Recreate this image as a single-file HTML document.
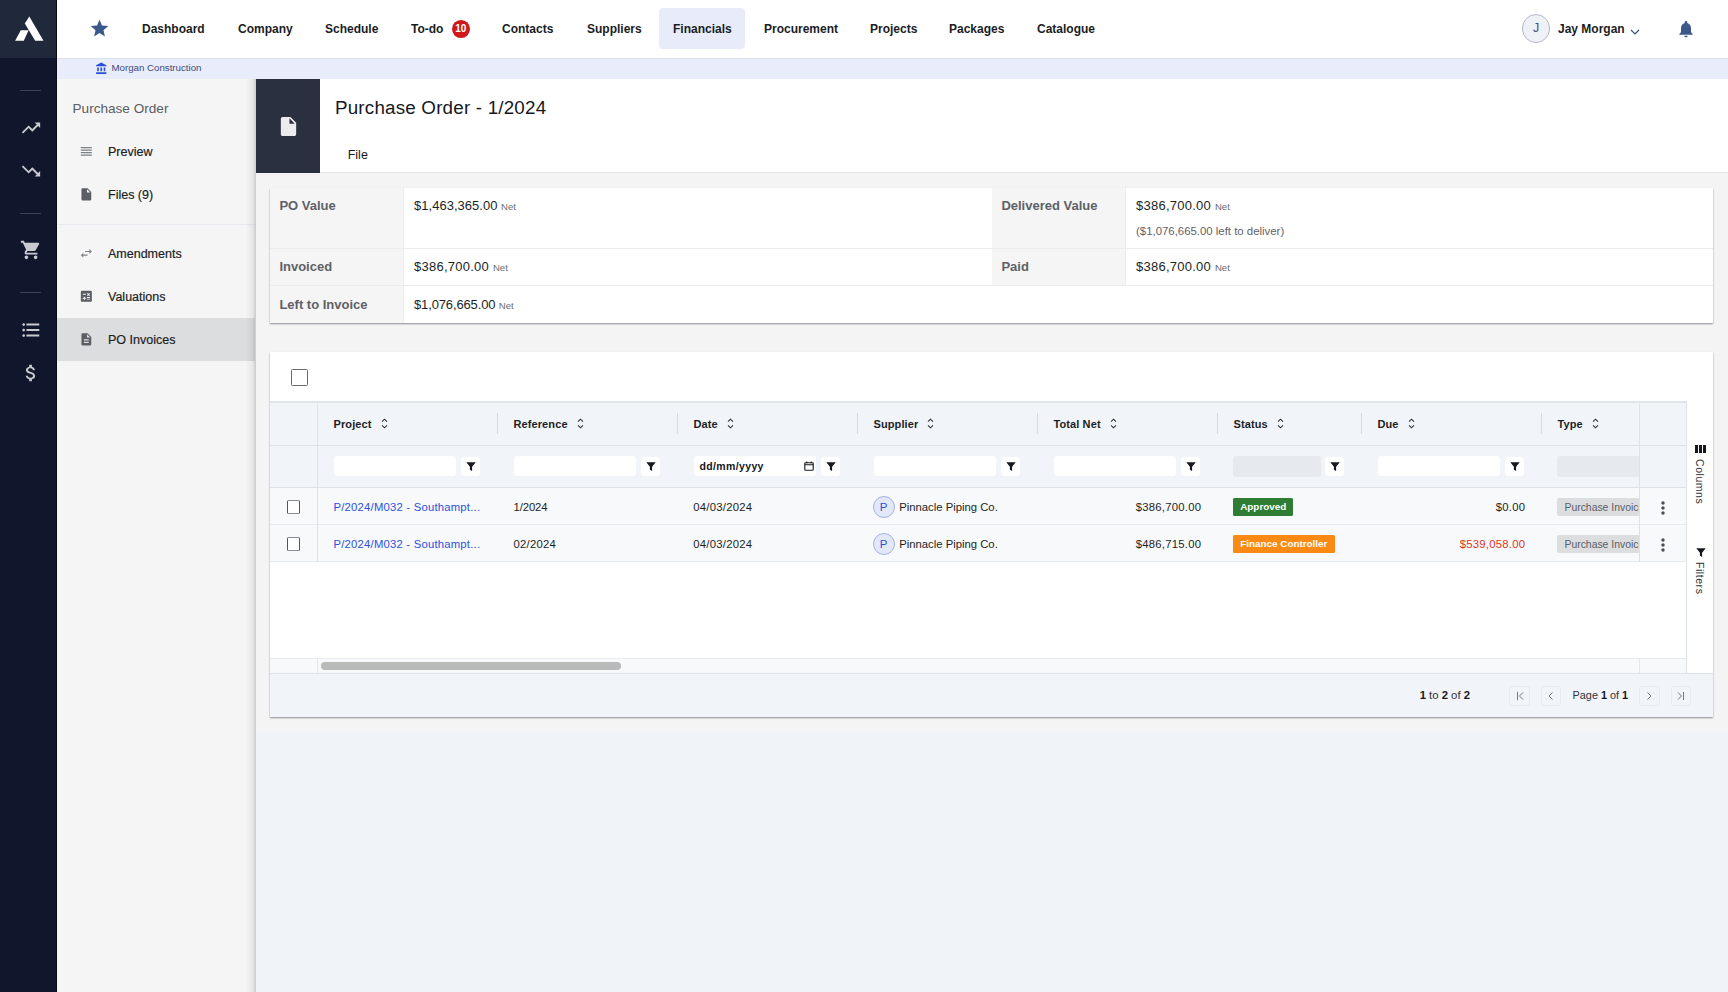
<!DOCTYPE html>
<html lang="en">
<head>
<meta charset="utf-8">
<title>Purchase Order - 1/2024</title>
<style>
*{box-sizing:border-box;margin:0;padding:0}
html,body{width:1728px;height:992px;overflow:hidden}
body{font-family:"Liberation Sans",sans-serif;background:#f4f4f4;color:#1c1f26;position:relative;font-size:12px}
.abs{position:absolute}
/* dark rail */
#rail{position:absolute;left:0;top:0;width:57.400px;height:992px;background:#10162c;border-right:1.400px solid #070a14;z-index:2}
#rail .logo{position:absolute;left:0;top:0;width:56px;height:57.500px;background:#20283b}
#rail .sep{position:absolute;left:20px;width:21px;height:1px;background:#3d4356}
#rail svg{position:absolute}
/* top nav */
#nav{position:absolute;left:57px;top:0;width:1671px;height:59px;background:#fff;border-bottom:1.700px solid #dde1e9}
#nav .it{position:absolute;top:1px;height:57px;line-height:57px;font-size:12px;font-weight:bold;color:#1a1d24;white-space:nowrap}
#nav .act{position:absolute;left:602px;top:8px;width:86px;height:41px;background:#e8ecfa;border-radius:4px}
#crumb{position:absolute;left:57px;top:59px;width:1671px;height:20px;background:#e9edfb}
#crumb span{position:absolute;left:54.500px;top:0;line-height:18.300px;font-size:9.700px;color:#3c4a7a;white-space:nowrap}
/* sub sidebar */
#side{position:absolute;left:57px;top:79px;width:198px;height:913px;background:#f5f5f5}
#side .ttl{position:absolute;left:15.500px;top:22px;font-size:13.600px;color:#5a5d63;white-space:nowrap}
#side .mi{position:absolute;left:0;width:198px;height:43px;line-height:44px;font-size:12.5px;color:#1c1f26;-webkit-text-stroke:.2px #1c1f26;padding-left:51px;white-space:nowrap}
#side .mi.sel{background:#dcdddf}
#side .hr{position:absolute;left:0;top:145px;width:198px;height:1px;background:#e6e9ee}
#side svg{position:absolute}
/* header */
#hdr{position:absolute;left:256px;top:79px;width:1472px;height:94px;background:#fff;border-bottom:1px solid #e6e6e6}
#hdr .ic{position:absolute;left:0;top:0;width:64px;height:94px;background:#2b3040}
#hdr h1{position:absolute;left:79px;top:18px;font-size:18.800px;font-weight:normal;color:#15181e;white-space:nowrap;letter-spacing:.2px}
#hdr .file{position:absolute;left:91.700px;top:68.500px;font-size:12.5px;color:#15181e}
/* summary */
#sum{position:absolute;left:270px;top:188px;width:1443px;height:134.500px;background:#fff;box-shadow:0 1px 1.500px rgba(40,44,60,.5)}
#sum .lb{position:absolute;background:#f5f5f5;width:134px;border-right:1px solid #ececec;font-size:13px;font-weight:bold;color:#5e6167;padding:10px 0 0 9.400px;white-space:nowrap}
#sum .vl{position:absolute;font-size:13px;color:#1c1f26;padding:10px 0 0 10px;letter-spacing:.25px;white-space:nowrap}
#sum .vl small{letter-spacing:0;font-size:9.600px;color:#6a6d73}
#sum .vl .sub{display:block;letter-spacing:0;font-size:11.400px;color:#5f6268;margin-top:11.900px}
#sum .ln{position:absolute;height:1px;background:#ececec}
/* grid */
#grid{position:absolute;left:270px;top:352px;width:1443px;height:365px;background:#fff;box-shadow:0 1px 1.500px rgba(40,44,60,.5)}
.cb{position:absolute;border:1.500px solid #666a70;border-radius:1.500px;background:#fff}
#gh{position:absolute;left:0;top:49px;width:1416px;height:45px;background:#f1f4f8;border-top:2px solid #e0e5ec;border-bottom:1px solid #dde2ea}
#gf{position:absolute;left:0;top:94px;width:1416px;height:42px;background:#f1f4f8;border-bottom:1px solid #dde2ea}
.hc{position:absolute;top:0;height:42.400px;line-height:42.400px;letter-spacing:.1px;font-size:11px;font-weight:bold;color:#1c1f26;white-space:nowrap}
.hsep{position:absolute;top:10px;width:1px;height:21px;background:#d5dae2}
.fi{position:absolute;top:10.300px;height:20px;width:122.500px;background:#fff;border-radius:3px}
.fi.dis{background:#e6e9ee}
.fb{position:absolute;top:11px;width:19px;height:19px;background:#fff;border-radius:3px}
.row{position:absolute;left:0;width:1416px;height:37px;background:#f7f9fb;border-bottom:1px solid #e7ebf0;font-size:11.300px;line-height:38.400px;letter-spacing:.25px;color:#1c1f26}
.row span{position:absolute;top:0;white-space:nowrap}
.row a{position:absolute;top:0;letter-spacing:.21px;color:#2d52dc;text-decoration:none;white-space:nowrap}
.vline{position:absolute;width:1px;background:#dde2ea}
.tag{position:absolute;height:18.500px;line-height:18.500px;letter-spacing:0;font-size:9.900px;font-weight:bold;color:#fff;padding:0 7.200px;border-radius:1.500px;white-space:nowrap}
.av{position:absolute;width:22px;height:22px;border-radius:50%;background:#e3e8f8;border:1px solid #a3b2e6;color:#2c50d4;font-size:11.500px;letter-spacing:0;line-height:20px;text-align:center}
#foot{position:absolute;left:0;top:321px;width:1443px;height:44px;background:#f1f4f8;border-top:1px solid #dde2ea;font-size:11.300px;color:#30333a}
#foot span{position:absolute;top:0;line-height:43.500px;white-space:nowrap}
#foot b{color:#15181e}
.pg{position:absolute;top:11.800px;width:20.800px;height:20.600px;border:1px solid #e7eaef;border-radius:3px}
#sp{position:absolute;left:1416px;top:49px;width:27px;height:272px;background:#fff;border-left:1px solid #dde2ea}
#sp .t{position:absolute;left:7px;font-size:10.500px;color:#30333a;writing-mode:vertical-rl;white-space:nowrap;letter-spacing:.55px}
#lowbg{position:absolute;left:256px;top:730.700px;width:1472px;height:262px;background:#f0f4f9}
</style>
</head>
<body>
<div id="lowbg"></div>
<div id="rail">
<div class="logo"><svg width="57" height="57" viewBox="0 0 57 57" style="left:0;top:0"><path fill="#fff" d="M29.3 16.4 L43.5 40.8 L35.2 40.8 L24.8 23.5 Z M20.8 30.2 L28.6 30.2 L23.8 40.8 L15.1 40.8 Z"/></svg></div>
<div class="sep" style="top:90px"></div>
<svg width="22" height="22" viewBox="0 0 24 24" style="left:20px;top:116.600px" fill="#c9cacf"><path d="M16 6l2.29 2.29-4.88 4.88-4-4L2 16.59 3.410 18l6-6 4 4 6.300-6.290L22 12V6z"/></svg>
<svg width="22" height="22" viewBox="0 0 24 24" style="left:20px;top:159.600px" fill="#c9cacf"><path d="M16 18l2.290-2.290-4.880-4.880-4 4L2 7.410 3.410 6l6 6 4-4 6.300 6.290L22 12v6z"/></svg>
<div class="sep" style="top:213px"></div>
<svg width="22" height="22" viewBox="0 0 24 24" style="left:20px;top:239px" fill="#c9cacf"><path d="M7 18c-1.100 0-1.990.9-1.990 2S5.900 22 7 22s2-.9 2-2-.9-2-2-2zM1 2v2h2l3.600 7.590-1.350 2.450c-.160.280-.250.610-.250.960 0 1.100.9 2 2 2h12v-2H7.420c-.140 0-.250-.110-.250-.250l.030-.120.900-1.630h7.450c.750 0 1.410-.410 1.750-1.030l3.580-6.490c.080-.140.120-.310.120-.480 0-.550-.450-1-1-1H5.210l-.940-2H1zm16 16c-1.100 0-1.990.9-1.990 2s.890 2 1.990 2 2-.9 2-2-.9-2-2-2z"/></svg>
<div class="sep" style="top:292px"></div>
<svg width="22" height="22" viewBox="0 0 24 24" style="left:20px;top:318.700px" fill="#c9cacf"><path d="M4 10.500c-.830 0-1.500.670-1.500 1.500s.670 1.500 1.500 1.500 1.500-.670 1.500-1.500-.670-1.500-1.500-1.500zm0-6c-.830 0-1.500.670-1.500 1.500S3.170 7.500 4 7.500 5.500 6.830 5.500 6 4.830 4.500 4 4.500zm0 12c-.830 0-1.500.680-1.500 1.500s.680 1.500 1.500 1.500 1.500-.680 1.500-1.500-.670-1.500-1.500-1.500zM7 19h14v-2H7v2zm0-6h14v-2H7v2zm0-8v2h14V5H7z"/></svg>
<svg width="22" height="22" viewBox="0 0 24 24" style="left:19.500px;top:362px" fill="#c9cacf"><path d="M11.800 10.900c-2.270-.590-3-1.200-3-2.150 0-1.090 1.010-1.850 2.700-1.850 1.780 0 2.440.850 2.500 2.100h2.210c-.070-1.720-1.120-3.300-3.210-3.810V3h-3v2.160c-1.940.420-3.500 1.680-3.500 3.610 0 2.310 1.910 3.460 4.700 4.130 2.500.6 3 1.480 3 2.410 0 .690-.490 1.790-2.700 1.790-2.060 0-2.870-.920-2.980-2.100h-2.200c.120 2.190 1.760 3.420 3.680 3.830V21h3v-2.150c1.950-.370 3.500-1.500 3.500-3.550 0-2.840-2.430-3.810-4.700-4.400z"/></svg>
</div>
<div id="nav">
<div class="act"></div>
<svg class="abs" width="21" height="21" viewBox="0 0 24 24" style="left:32px;top:18.300px" fill="#3b588b"><path d="M12 17.270L18.180 21l-1.640-7.030L22 9.240l-7.190-.610L12 2 9.190 8.630 2 9.240l5.460 4.730L5.820 21z"/></svg>
<div class="it" style="left:85px">Dashboard</div>
<div class="it" style="left:181px">Company</div>
<div class="it" style="left:268px">Schedule</div>
<div class="it" style="left:354px">To-do</div>
<div class="it" style="left:445px">Contacts</div>
<div class="it" style="left:530px">Suppliers</div>
<div class="it" style="left:616px">Financials</div>
<div class="it" style="left:707px">Procurement</div>
<div class="it" style="left:813px">Projects</div>
<div class="it" style="left:892px">Packages</div>
<div class="it" style="left:980px">Catalogue</div>
<div class="abs" style="left:394.800px;top:20px;width:17.800px;height:17.800px;border-radius:50%;background:#cf181b;color:#fff;font-size:10px;font-weight:bold;line-height:18px;text-align:center">10</div>
<div class="abs" style="left:1464.800px;top:14.300px;width:28.600px;height:28.600px;border-radius:50%;background:#eef1f6;border:1px solid #b4b9c4;color:#44528a;font-size:12.500px;line-height:26.500px;text-align:center">J</div>
<div class="it" style="left:1501px">Jay Morgan</div>
<svg class="abs" width="10" height="6" viewBox="0 0 10 6" style="left:1573px;top:29px" fill="none" stroke="#3b4a78" stroke-width="1.2"><path d="M1 1l4 4 4-4"/></svg>
<svg class="abs" width="20" height="20" viewBox="0 0 24 24" style="left:1619px;top:19px" fill="#3b588b"><path d="M12 22c1.100 0 2-.9 2-2h-4c0 1.100.89 2 2 2zm6-6v-5c0-3.070-1.640-5.640-4.500-6.320V4c0-.830-.670-1.500-1.500-1.500s-1.500.670-1.500 1.500v.680C7.630 5.360 6 7.920 6 11v5l-2 2v1h16v-1l-2-2z"/></svg>
</div>
<div id="crumb"><svg class="abs" width="13" height="13" viewBox="0 0 24 24" style="left:37.500px;top:3.300px" fill="#2a4fd6"><path d="M4 10v7h3v-7H4zm6 0v7h3v-7h-3zM2 22h19v-3H2v3zm14-12v7h3v-7h-3zm-4.500-9L2 6v2h19V6l-9.500-5z"/></svg><span>Morgan Construction</span></div>
<div id="side">
<div class="ttl">Purchase Order</div>
<div class="mi" style="top:51px"><svg width="14.7" height="14.7" viewBox="0 0 24 24" fill="#7d8086" style="left:22px;top:14.2px"><path d="M3 15h18v-2H3v2zm0 4h18v-2H3v2zm0-8h18V9H3v2zm0-6v2h18V5H3z"/></svg>Preview</div>
<div class="mi" style="top:94px"><svg width="14.7" height="14.7" viewBox="0 0 24 24" fill="#5b5e64" style="left:22px;top:14.2px"><path d="M6 2c-1.100 0-1.990.9-1.990 2L4 20c0 1.100.890 2 1.990 2H18c1.100 0 2-.9 2-2V8l-6-6H6zm7 7V3.500L18.500 9H13z"/></svg>Files (9)</div>
<div class="hr"></div>
<div class="mi" style="top:152.5px"><svg width="14.7" height="14.7" viewBox="0 0 24 24" fill="#7d8086" style="left:22px;top:14.2px"><path d="M6.990 11L3 15l3.990 4v-3H14v-2H6.990v-3zM21 9l-3.990-4v3H10v2h7.010v3L21 9z"/></svg>Amendments</div>
<div class="mi" style="top:195.5px"><svg width="14.7" height="14.7" viewBox="0 0 24 24" fill="#5b5e64" style="left:22px;top:14.2px"><path d="M19 3H5c-1.100 0-2 .9-2 2v14c0 1.100.9 2 2 2h14c1.100 0 2-.9 2-2V5c0-1.100-.9-2-2-2zm-5.970 4.530l1.060-1.060 1.410 1.410 1.410-1.410 1.060 1.060-1.410 1.410 1.410 1.410-1.060 1.060-1.410-1.400-1.410 1.410-1.060-1.060 1.410-1.410-1.410-1.420zM6.250 7.720h5v1.500h-5v-1.500zM11.500 16h-2v2H8v-2H6v-1.500h2v-2h1.500v2h2V16zm6.500 1.250h-5v-1.500h5v1.500zm0-2.500h-5v-1.500h5v1.500z"/></svg>Valuations</div>
<div class="mi sel" style="top:238.5px"><svg width="14.7" height="14.7" viewBox="0 0 24 24" fill="#5b5e64" style="left:22px;top:14.2px"><path d="M14 2H6c-1.100 0-1.990.9-1.990 2L4 20c0 1.100.890 2 1.990 2H18c1.100 0 2-.9 2-2V8l-6-6zm2 16H8v-2h8v2zm0-4H8v-2h8v2zm-3-5V3.500L18.500 9H13z"/></svg>PO Invoices</div>
</div>
<div id="hdr">
<div class="ic"><svg class="abs" width="23" height="23" viewBox="0 0 24 24" style="left:20.5px;top:35.5px" fill="#ececee"><path d="M6 2c-1.100 0-1.990.9-1.990 2L4 20c0 1.100.890 2 1.990 2H18c1.100 0 2-.9 2-2V8l-6-6H6zm7 7V3.500L18.500 9H13z"/></svg></div>
<h1>Purchase Order - 1/2024</h1>
<div class="file">File</div>
</div>
<div class="abs" style="left:245px;top:79px;width:11px;height:913px;background:linear-gradient(to right,rgba(0,0,0,0),rgba(0,0,0,.05) 65%,rgba(0,0,0,.17))"></div>
<div id="sum">
<div class="lb" style="left:0;top:0;height:61px">PO Value</div>
<div class="vl" style="left:134px;top:0;letter-spacing:.02px">$1,463,365.00 <small>Net</small></div>
<div class="lb" style="left:722px;top:0;height:61px">Delivered Value</div>
<div class="vl" style="left:856px;top:0">$386,700.00 <small>Net</small><span class="sub">($1,076,665.00 left to deliver)</span></div>
<div class="lb" style="left:0;top:60.500px;height:37px;padding-top:10.700px">Invoiced</div>
<div class="vl" style="left:134px;top:60.500px;padding-top:10.700px">$386,700.00 <small>Net</small></div>
<div class="lb" style="left:722px;top:60.500px;height:37px;padding-top:10.700px">Paid</div>
<div class="vl" style="left:856px;top:60.500px;padding-top:10.700px">$386,700.00 <small>Net</small></div>
<div class="lb" style="left:0;top:97.500px;height:37px;padding-top:11.200px">Left to Invoice</div>
<div class="vl" style="left:134px;top:97.500px;padding-top:11.200px;letter-spacing:-.14px">$1,076,665.00 <small>Net</small></div>
<div class="ln" style="left:0;top:60px;width:1443px"></div>
<div class="ln" style="left:0;top:97px;width:1443px"></div>
</div>
<div id="grid">
<div class="cb" style="left:20.700px;top:16.800px;width:17.400px;height:17.300px"></div>
<div id="gh">
<div class="hc" style="left:63.5px">Project<svg width="7" height="11" viewBox="0 0 7 11" style="display:inline-block;vertical-align:-.8px;margin-left:9px" fill="none" stroke="#30333a" stroke-width="1.1"><path d="M1 3.700l2.500-2.500L6 3.700M1 7.300l2.500 2.500L6 7.300"/></svg></div>
<div class="hc" style="left:243.5px">Reference<svg width="7" height="11" viewBox="0 0 7 11" style="display:inline-block;vertical-align:-.8px;margin-left:9px" fill="none" stroke="#30333a" stroke-width="1.1"><path d="M1 3.700l2.500-2.500L6 3.700M1 7.300l2.500 2.500L6 7.300"/></svg></div><div class="hsep" style="left:227px"></div>
<div class="hc" style="left:423.5px">Date<svg width="7" height="11" viewBox="0 0 7 11" style="display:inline-block;vertical-align:-.8px;margin-left:9px" fill="none" stroke="#30333a" stroke-width="1.1"><path d="M1 3.700l2.500-2.500L6 3.700M1 7.300l2.500 2.500L6 7.300"/></svg></div><div class="hsep" style="left:407px"></div>
<div class="hc" style="left:603.5px">Supplier<svg width="7" height="11" viewBox="0 0 7 11" style="display:inline-block;vertical-align:-.8px;margin-left:9px" fill="none" stroke="#30333a" stroke-width="1.1"><path d="M1 3.700l2.500-2.500L6 3.700M1 7.300l2.500 2.500L6 7.300"/></svg></div><div class="hsep" style="left:587px"></div>
<div class="hc" style="left:783.5px">Total Net<svg width="7" height="11" viewBox="0 0 7 11" style="display:inline-block;vertical-align:-.8px;margin-left:9px" fill="none" stroke="#30333a" stroke-width="1.1"><path d="M1 3.700l2.500-2.500L6 3.700M1 7.300l2.500 2.500L6 7.300"/></svg></div><div class="hsep" style="left:767px"></div>
<div class="hc" style="left:963.5px">Status<svg width="7" height="11" viewBox="0 0 7 11" style="display:inline-block;vertical-align:-.8px;margin-left:9px" fill="none" stroke="#30333a" stroke-width="1.1"><path d="M1 3.700l2.500-2.500L6 3.700M1 7.300l2.500 2.500L6 7.300"/></svg></div><div class="hsep" style="left:947px"></div>
<div class="hc" style="left:1107.5px">Due<svg width="7" height="11" viewBox="0 0 7 11" style="display:inline-block;vertical-align:-.8px;margin-left:9px" fill="none" stroke="#30333a" stroke-width="1.1"><path d="M1 3.700l2.500-2.500L6 3.700M1 7.300l2.500 2.500L6 7.300"/></svg></div><div class="hsep" style="left:1091px"></div>
<div class="hc" style="left:1287.5px">Type<svg width="7" height="11" viewBox="0 0 7 11" style="display:inline-block;vertical-align:-.8px;margin-left:9px" fill="none" stroke="#30333a" stroke-width="1.1"><path d="M1 3.700l2.500-2.500L6 3.700M1 7.300l2.500 2.500L6 7.300"/></svg></div><div class="hsep" style="left:1271px"></div>
</div>
<div id="gf">
<div class="fi" style="left:63.5px"></div><div class="fb" style="left:191px"><svg class="abs" width="10" height="10" viewBox="0 0 10 10" style="left:4.5px;top:4.7px" fill="#15181e"><path d="M0.300 0.300h9.400L6.100 4.800v4.200L3.900 7.700V4.800z"/></svg></div>
<div class="fi" style="left:243.5px"></div><div class="fb" style="left:371px"><svg class="abs" width="10" height="10" viewBox="0 0 10 10" style="left:4.5px;top:4.7px" fill="#15181e"><path d="M0.300 0.300h9.400L6.100 4.800v4.200L3.900 7.700V4.800z"/></svg></div>
<div class="fi" style="left:423.5px"><span class="abs" style="left:6px;top:0;line-height:21.500px;font-size:10.500px;letter-spacing:.36px;color:#15181e;font-weight:bold;white-space:nowrap">dd/mm/yyyy</span><svg class="abs" width="10" height="10" viewBox="0 0 10 10" style="left:110.700px;top:5px" fill="none" stroke="#15181e" stroke-width="1.1"><rect x=".8" y="1.800" width="8.400" height="7.400" rx=".8"/><path d="M.8 3.800h8.400M2.800 .5v1.800M7.200 .5v1.800"/></svg></div><div class="fb" style="left:551px"><svg class="abs" width="10" height="10" viewBox="0 0 10 10" style="left:4.5px;top:4.7px" fill="#15181e"><path d="M0.300 0.300h9.400L6.100 4.800v4.200L3.900 7.700V4.800z"/></svg></div>
<div class="fi" style="left:603.5px"></div><div class="fb" style="left:731px"><svg class="abs" width="10" height="10" viewBox="0 0 10 10" style="left:4.5px;top:4.7px" fill="#15181e"><path d="M0.300 0.300h9.400L6.100 4.800v4.200L3.900 7.700V4.800z"/></svg></div>
<div class="fi" style="left:783.5px"></div><div class="fb" style="left:911px"><svg class="abs" width="10" height="10" viewBox="0 0 10 10" style="left:4.5px;top:4.7px" fill="#15181e"><path d="M0.300 0.300h9.400L6.100 4.800v4.200L3.900 7.700V4.800z"/></svg></div>
<div class="fi dis" style="left:963px;width:88px;top:9.500px;height:21.500px"></div><div class="fb" style="left:1055px"><svg class="abs" width="10" height="10" viewBox="0 0 10 10" style="left:4.5px;top:4.7px" fill="#15181e"><path d="M0.300 0.300h9.400L6.100 4.800v4.200L3.900 7.700V4.800z"/></svg></div>
<div class="fi" style="left:1107.5px"></div><div class="fb" style="left:1235px"><svg class="abs" width="10" height="10" viewBox="0 0 10 10" style="left:4.5px;top:4.7px" fill="#15181e"><path d="M0.300 0.300h9.400L6.100 4.800v4.200L3.900 7.700V4.800z"/></svg></div>
<div class="fi dis" style="left:1287px;width:82px;top:9.500px;height:21.500px;border-radius:3px 0 0 3px"></div>
</div>
<div class="row" style="top:136px"><div class="cb" style="left:16.900px;top:12.300px;width:13.300px;height:13.400px;border-width:1.300px;border-color:#8a8d92 #3f5687"></div><a style="left:63.5px">P/2024/M032 - Southampt...</a><span style="left:243.5px;letter-spacing:-.1px">1/2024</span><span style="left:423.3px">04/03/2024</span><div class="av" style="left:602.7px;top:7.700px">P</div><span style="letter-spacing:0;left:629.2px">Pinnacle Piping Co.</span><span style="right:484.7px">$386,700.00</span><div class="tag" style="left:963px;top:9.700px;background:#2e7d32">Approved</div><span style="right:160.7px;color:#1c1f26">$0.00</span><div class="tag" style="left:1287.3px;top:9.700px;background:#dcdddf;color:#5b5e64;font-weight:normal;font-size:10.400px;line-height:19.900px;width:81.700px;border-radius:2px 0 0 2px;overflow:hidden">Purchase Invoice</div></div>
<div class="row" style="top:173px"><div class="cb" style="left:16.900px;top:12.300px;width:13.300px;height:13.400px;border-width:1.300px;border-color:#8a8d92 #3f5687"></div><a style="left:63.5px">P/2024/M032 - Southampt...</a><span style="left:243.5px">02/2024</span><span style="left:423.3px">04/03/2024</span><div class="av" style="left:602.7px;top:7.700px">P</div><span style="letter-spacing:0;left:629.2px">Pinnacle Piping Co.</span><span style="right:484.7px">$486,715.00</span><div class="tag" style="left:963px;top:9.700px;background:#fb8a15">Finance Controller</div><span style="right:160.7px;color:#e0351c">$539,058.00</span><div class="tag" style="left:1287.3px;top:9.700px;background:#dcdddf;color:#5b5e64;font-weight:normal;font-size:10.400px;line-height:19.900px;width:81.700px;border-radius:2px 0 0 2px;overflow:hidden">Purchase Invoice</div></div>
<div class="abs" style="left:0;top:306px;width:1416px;height:15px;background:#f7f9fb;border-top:1px solid #e9ecf0"></div>
<div class="abs" style="left:50.500px;top:310px;width:300px;height:8px;border-radius:4px;background:#b9baba"></div>
<div class="vline" style="left:47px;top:52px;height:158px"></div>
<div class="vline" style="left:47px;top:306px;height:15px;background:#e4e8ee"></div>
<div class="vline" style="left:1369px;top:52px;height:158px"></div>
<div class="vline" style="left:1369px;top:306px;height:15px;background:#e4e8ee"></div>
<svg class="abs" width="20" height="20" viewBox="0 0 24 24" style="left:1382.7px;top:146.3px" fill="#4a4d54"><path d="M12 8c1.100 0 2-.9 2-2s-.9-2-2-2-2 .9-2 2 .9 2 2 2zm0 2c-1.100 0-2 .9-2 2s.9 2 2 2 2-.9 2-2-.9-2-2-2zm0 6c-1.100 0-2 .9-2 2s.9 2 2 2 2-.9 2-2-.9-2-2-2z"/></svg>
<svg class="abs" width="20" height="20" viewBox="0 0 24 24" style="left:1382.7px;top:183.3px" fill="#4a4d54"><path d="M12 8c1.100 0 2-.9 2-2s-.9-2-2-2-2 .9-2 2 .9 2 2 2zm0 2c-1.100 0-2 .9-2 2s.9 2 2 2 2-.9 2-2-.9-2-2-2zm0 6c-1.100 0-2 .9-2 2s.9 2 2 2 2-.9 2-2-.9-2-2-2z"/></svg>
<div id="sp"><svg class="abs" width="11" height="8" viewBox="0 0 11 8" style="left:8px;top:44px" fill="#15181e"><path d="M0 0h3v8H0zM4 0h3v8H4zM8 0h3v8H8z"/></svg><div class="t" style="top:58px">Columns</div><svg class="abs" width="10" height="10" viewBox="0 0 10 10" style="left:8.500px;top:147px" fill="#15181e"><path d="M0.300 0.300h9.400L6.100 4.800v4.200L3.900 7.700V4.800z"/></svg><div class="t" style="top:161px">Filters</div></div>
<div id="foot"><span style="left:1149.7px"><b>1</b> to <b>2</b> of <b>2</b></span><span style="left:1302.6px;font-size:10.850px">Page <b>1</b> of <b>1</b></span><div class="pg" style="left:1239.3px"><svg class="abs" width="10" height="10" viewBox="0 0 10 10" style="left:4.400px;top:4.300px" fill="none" stroke="#74777e" stroke-width="1"><path d="M2.500 1v8M8 1.500L4.500 5 8 8.500"/></svg></div><div class="pg" style="left:1270.5px"><svg class="abs" width="10" height="10" viewBox="0 0 10 10" style="left:4.400px;top:4.300px" fill="none" stroke="#74777e" stroke-width="1"><path d="M6.500 1.500L3 5l3.500 3.500"/></svg></div><div class="pg" style="left:1368.8px"><svg class="abs" width="10" height="10" viewBox="0 0 10 10" style="left:4.400px;top:4.300px" fill="none" stroke="#74777e" stroke-width="1"><path d="M3.500 1.500L7 5 3.500 8.500"/></svg></div><div class="pg" style="left:1400.5px"><svg class="abs" width="10" height="10" viewBox="0 0 10 10" style="left:4.400px;top:4.300px" fill="none" stroke="#74777e" stroke-width="1"><path d="M7.500 1v8M2 1.500L5.500 5 2 8.500"/></svg></div></div>
</div>
</body>
</html>
